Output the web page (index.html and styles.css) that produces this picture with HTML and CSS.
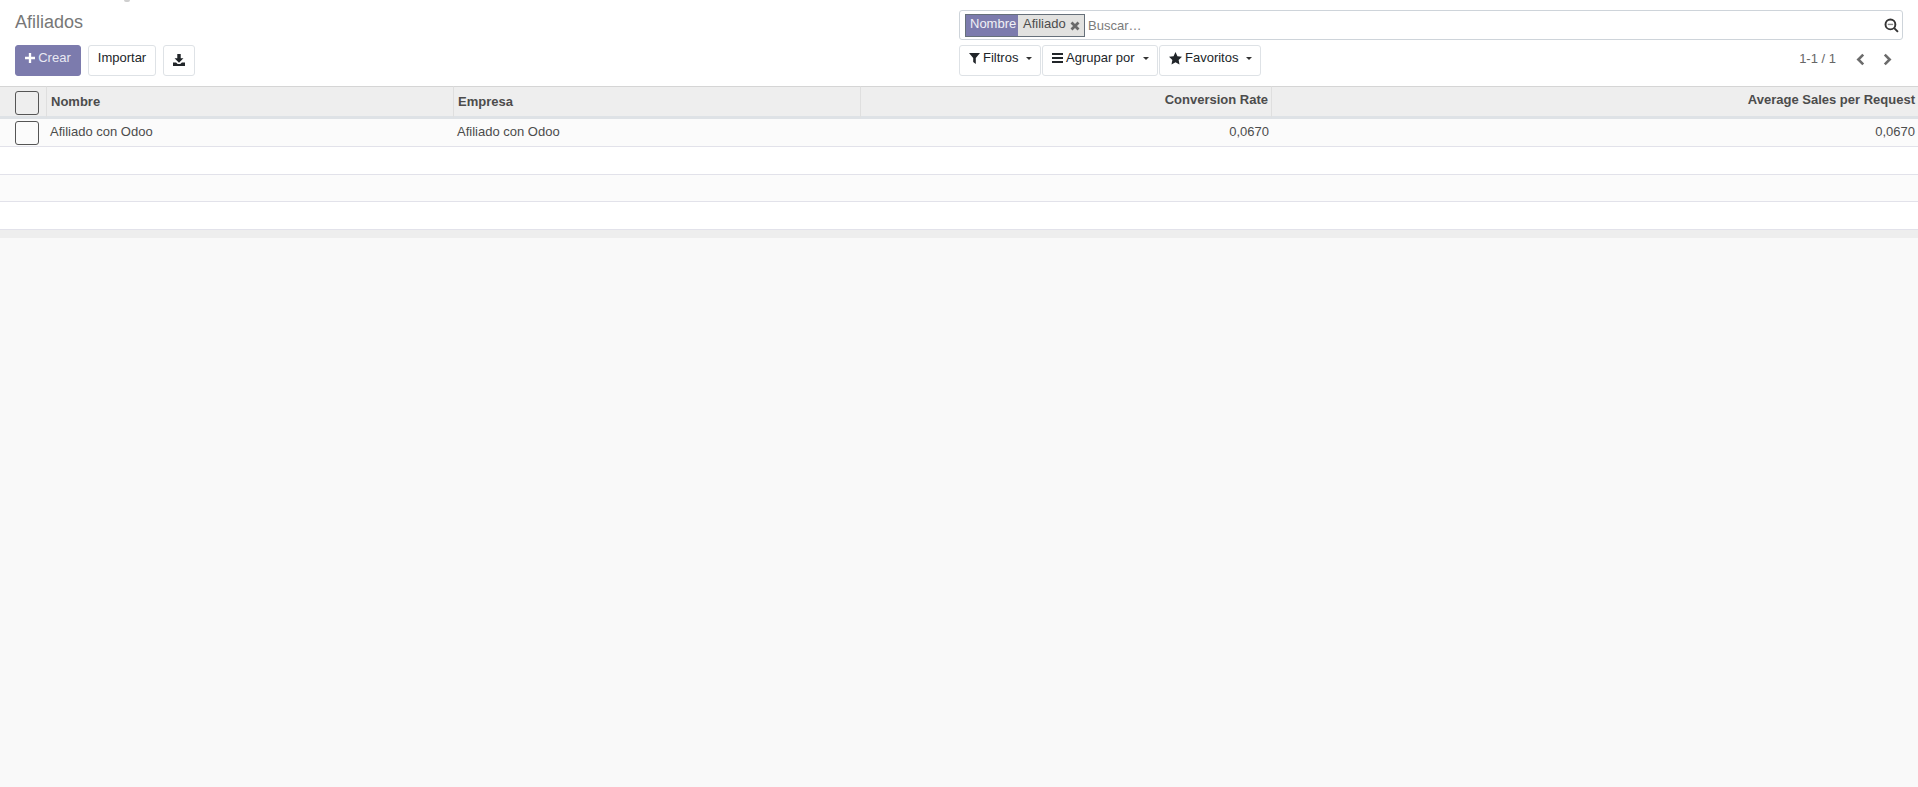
FILE: index.html
```html
<!DOCTYPE html>
<html lang="es">
<head>
<meta charset="utf-8">
<title>Afiliados</title>
<link rel="stylesheet" href="styles.css">
</head>
<body>
<div class="app">
  <span class="clipped-mark"></span>
  <header class="panel">
    <div class="panel-left">
      <h1 class="title">Afiliados</h1>
      <div class="actions">
        <button class="btn btn-primary"><svg class="ico ico-plus" viewBox="0 0 12 12"><path d="M4.6 0h2.8v4.6H12v2.8H7.4V12H4.6V7.4H0V4.6h4.6z"/></svg>Crear</button>
        <button class="btn btn-import">Importar</button>
        <button class="btn btn-icon"><svg class="ico ico-dl" viewBox="0 0 14 14"><path d="M5 0h4v5h3.2L7 10.2 1.800 5H5zM0 10h3.600l1.900 1.800h3L10.400 10H14v4H0z"/></svg></button>
      </div>
    </div>
    <div class="panel-right">
      <div class="search">
        <div class="facet"><span class="facet-label">Nombre</span><span class="facet-value">Afiliado<svg class="ico-x" viewBox="0 0 10 10"><path d="M1.500 1.500l7 7m0-7l-7 7"/></svg></span></div>
        <span class="placeholder">Buscar…</span>
        <svg class="ico-search" viewBox="0 0 14 14"><circle cx="6" cy="6" r="4.600"/><path class="lens" d="M3.500 6h5"/><path d="M9.500 9.500L13 13"/></svg>
      </div>
      <div class="tools">
        <div class="filters">
          <button class="btn btn-tool btn-filter"><svg class="ico ico-filter" viewBox="0 0 11 11"><path d="M0 0h11L6.800 5v6L4.200 9V5z"/></svg>Filtros<i class="caret"></i></button>
          <button class="btn btn-tool btn-group"><svg class="ico ico-bars" viewBox="0 0 11 10"><path d="M0 0h11v2H0zM0 4h11v2H0zM0 8h11v2H0z"/></svg>Agrupar por<i class="caret"></i></button>
          <button class="btn btn-tool btn-fav"><svg class="ico ico-star" viewBox="0 0 12 12"><path d="M6 0l1.800 3.900 4.200.5-3.100 2.900.8 4.200L6 9.400 2.300 11.500l.8-4.200L0 4.400l4.200-.5z"/></svg>Favoritos<i class="caret"></i></button>
        </div>
        <div class="pager">
          <span class="pager-count">1-1 / 1</span>
          <svg class="chev chev-left" viewBox="0 0 8 12"><path d="M6.500 1.500L2 6l4.500 4.500"/></svg>
          <svg class="chev" viewBox="0 0 8 12"><path d="M1.500 1.500L6 6l-4.500 4.500"/></svg>
        </div>
      </div>
    </div>
  </header>
  <table class="list">
    <colgroup>
      <col class="col-check"><col class="col-name"><col class="col-company"><col class="col-rate"><col class="col-avg">
    </colgroup>
    <thead>
      <tr>
        <th class="cell-check"><span class="check"></span></th>
        <th class="th-name">Nombre</th>
        <th class="th-company">Empresa</th>
        <th class="num">Conversion Rate</th>
        <th class="num last">Average Sales per Request</th>
      </tr>
    </thead>
    <tbody>
      <tr class="row-odd">
        <td class="cell-check"><span class="check"></span></td>
        <td class="cell-text">Afiliado con Odoo</td>
        <td class="cell-text">Afiliado con Odoo</td>
        <td class="cell-text num">0,0670</td>
        <td class="cell-text num last">0,0670</td>
      </tr>
      <tr class="row-even"><td colspan="5"></td></tr>
      <tr class="row-odd row-short"><td colspan="5"></td></tr>
      <tr class="row-even"><td colspan="5"></td></tr>
    </tbody>
    <tfoot>
      <tr><td colspan="5"></td></tr>
    </tfoot>
  </table>
</div>
</body>
</html>
```
FILE: styles.css
```css
* { box-sizing: border-box; }
html, body { margin: 0; height: 100%; }
body { font-family: "Liberation Sans", Arial, sans-serif; font-size: 13px; color: #4c4c4c; background: #f9f9f9; overflow: hidden; }
.app { position: relative; height: 100vh; background: #f9f9f9; }
.clipped-mark { position: absolute; top: 0; left: 124px; width: 6px; height: 2px; background: #cfcfcf; border-radius: 0 0 3px 3px; }

.panel { display: flex; height: 86px; background: #fff; padding: 0 15px 0 15px; }
.panel-left { width: 944px; flex: none; }
.panel-right { flex: 1; padding-top: 10px; }
.title { margin: 0; padding-top: 11px; height: 45px; font-size: 18px; line-height: 22px; font-weight: 400; color: #777; }
.actions { display: flex; gap: 7px; }

.btn { height: 31px; margin: 0; padding: 0 0 5px; display: inline-flex; align-items: center; justify-content: center; font: 13px/18px "Liberation Sans", Arial, sans-serif; background: #fff; color: #212529; border: 1px solid #dee2e6; border-radius: 3px; }
.btn-primary { width: 66px; background: #7c7bad; border-color: #7c7bad; color: #e9e9f3; }
.btn-import { width: 68px; }
.btn-icon { width: 32px; padding: 0 0 2px; }
.ico { display: block; fill: currentColor; flex: none; }
.ico-plus { width: 10px; height: 10px; margin-right: 3px; fill: #fff; }
.ico-dl { width: 12px; height: 12px; }

.search { display: flex; align-items: center; height: 30px; border: 1px solid #ced4da; border-radius: 3px; padding: 0 5px; background: #fff; }
.facet { display: flex; height: 23px; border: 1px solid #66707a; }
.facet-label { width: 52px; background: #7c7bad; color: #f1f1f6; padding: 0 0 0 4px; line-height: 17px; }
.facet-value { display: flex; align-items: flex-start; width: 66px; background: #e2e2e0; color: #4c4c4c; padding-left: 5px; line-height: 17px; }
.ico-x { width: 10px; height: 10px; margin: 6px 0 0 4px; fill: none; stroke: #6a6a6a; stroke-width: 2.800; }
.placeholder { margin-left: 3px; color: #7b7b7b; }
.ico-search { width: 15px; height: 15px; margin-left: auto; margin-right: -2px; fill: none; stroke: #333; stroke-width: 1.800; }
.ico-search .lens { stroke: #888; stroke-width: 1.300; }

.tools { display: flex; justify-content: space-between; margin-top: 5px; }
.filters { display: flex; gap: 1px; }
.btn-tool { justify-content: flex-start; padding-left: 9px; }
.btn-filter { width: 82px; }
.btn-group { width: 116px; }
.btn-fav { width: 102px; }
.ico-filter { width: 11px; height: 11px; margin-right: 3px; }
.ico-bars { width: 11px; height: 10px; margin-right: 3px; }
.ico-star { width: 13px; height: 13px; margin-right: 3px; }
.caret { width: 0; height: 0; margin-left: 8px; border-top: 3.500px solid #333; border-left: 3.500px solid transparent; border-right: 3.500px solid transparent; }

.pager { display: flex; align-items: flex-start; padding-right: 11px; color: #666; height: 31px; }
.pager-count { line-height: 18px; margin-top: 5px; }
.chev { width: 9px; height: 13px; margin-top: 8px; margin-left: 18px; fill: none; stroke: #6b6b6b; stroke-width: 2.400; }
.chev-left { margin-left: 20px; }

.list { width: 1918px; border-collapse: separate; border-spacing: 0; table-layout: fixed; }
.col-check { width: 47px; }
.col-name { width: 407px; }
.col-company { width: 407px; }
.col-rate { width: 411px; }
.list th { height: 33px; padding: 0 2px 0 4px; background: #eee; border-top: 1px solid #d5d5d5; border-bottom: 3px solid #dee2e6; border-right: 1px solid #dfdfdf; font-weight: 700; text-align: left; color: #4c4c4c; line-height: 18px; }
.list th.num { padding-right: 3px; padding-bottom: 4px; }
.list th.last { border-right: 0; }
.list td { height: 28px; padding: 0 3px 0 3px; border-bottom: 1px solid #e2e2ea; line-height: 18px; }
.list td.cell-text { padding-bottom: 2px; }
.list .num { text-align: right; }
.list .cell-check { padding: 0 0 0 15px; line-height: 0; }
.list th.cell-check { padding: 4px 0 0 15px; vertical-align: top; }
.list td.cell-check { vertical-align: top; padding-top: 2px; }
.check { display: inline-block; width: 24px; height: 24px; border: 1px solid #555; border-radius: 3px; }
.row-odd td { background: #fbfbfb; }
.row-even td { background: #fff; }
.row-short td { height: 27px; }
.list tfoot td { height: 8px; padding: 0; background: #eee; border-top: 0; border-bottom: 0; }
```
